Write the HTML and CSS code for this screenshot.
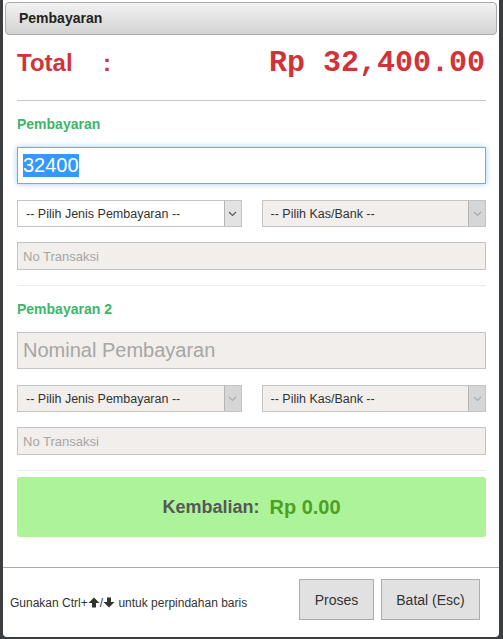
FILE: index.html
```html
<!DOCTYPE html>
<html lang="en">
<head>
    <meta charset="UTF-8">
    <title>Pembayaran</title>
    <link rel="stylesheet" href="styles.css">
</head>
<body>
    <div class="dialog">
        <div class="titlebar">Pembayaran</div>

        <div class="content">
            <div class="total">
                <span class="total-label">Total</span>
                <span class="total-colon">:</span>
                <span class="total-value">Rp 32,400.00</span>
            </div>
            <div class="rule"></div>

            <div class="section-title">Pembayaran</div>
            <div class="field big focus"><span class="picked">32400</span></div>
            <div class="pair">
                <div class="select">
                    <span>-- Pilih Jenis Pembayaran --</span>
                    <span class="arrow"><svg width="9" height="6" viewBox="0 0 9 6"><path d="M1 1l3.5 3.5L8 1" fill="none" stroke="#555" stroke-width="1.1"/></svg></span>
                </div>
                <div class="select off">
                    <span>-- Pilih Kas/Bank --</span>
                    <span class="arrow"><svg width="9" height="6" viewBox="0 0 9 6"><path d="M1 1l3.5 3.5L8 1" fill="none" stroke="#aaa" stroke-width="1.1"/></svg></span>
                </div>
            </div>
            <div class="field small off"><span class="hint">No Transaksi</span></div>
            <div class="rule light"></div>

            <div class="section-title">Pembayaran 2</div>
            <div class="field big off"><span class="hint">Nominal Pembayaran</span></div>
            <div class="pair">
                <div class="select off">
                    <span>-- Pilih Jenis Pembayaran --</span>
                    <span class="arrow"><svg width="9" height="6" viewBox="0 0 9 6"><path d="M1 1l3.5 3.5L8 1" fill="none" stroke="#aaa" stroke-width="1.1"/></svg></span>
                </div>
                <div class="select off">
                    <span>-- Pilih Kas/Bank --</span>
                    <span class="arrow"><svg width="9" height="6" viewBox="0 0 9 6"><path d="M1 1l3.5 3.5L8 1" fill="none" stroke="#aaa" stroke-width="1.1"/></svg></span>
                </div>
            </div>
            <div class="field small off"><span class="hint">No Transaksi</span></div>
            <div class="rule light"></div>

            <div class="change">
                <span class="change-label">Kembalian:</span>
                <span class="change-value">Rp 0.00</span>
            </div>
        </div>

        <div class="footer">
            <div class="tip">
                Gunakan Ctrl+<svg class="key" width="12" height="11" viewBox="0 0 12 11"><path d="M6 0.5L11.5 6H8V10.5H4V6H0.5Z" fill="#333"/></svg>/<svg class="key" width="12" height="11" viewBox="0 0 12 11"><path d="M6 10.5L11.5 5H8V0.5H4V5H0.5Z" fill="#333"/></svg> untuk perpindahan baris
            </div>
            <div class="buttons">
                <button class="btn proses">Proses</button>
                <button class="btn batal">Batal (Esc)</button>
            </div>
        </div>
    </div>
</body>
</html>
```

FILE: styles.css
```css
*{
    box-sizing: border-box;
    font-family: "Liberation Sans", Arial, sans-serif;
}

body{
    margin: 0;
    background-color: #3b3d40;
    height: 639px;
    overflow: hidden;
}

.dialog{
    margin: 0 4px 0 3px;
    height: 637px;
    background-color: #fff;
    border-radius: 0 0 4px 4px;
    padding-top: 2px;
    display: flex;
    flex-direction: column;
}

.titlebar{
    margin: 0 2px;
    height: 33px;
    border: 1px solid #aaa;
    border-radius: 4px;
    background: linear-gradient(#f2f2f2, #d3d3d3);
    font-size: 14px;
    font-weight: bold;
    color: #222;
    padding-left: 13px;
    line-height: 31px;
}

.content{
    padding: 0 13px 0 14px;
}

.total{
    display: flex;
    align-items: center;
    margin-top: 9px;
    height: 38px;
    color: #d2333a;
}

.total-label{
    font-size: 24px;
    font-weight: bold;
    width: 86px;
}

.total-colon{
    font-size: 24px;
    font-weight: bold;
}

.total-value{
    margin-left: auto;
    font-family: "Liberation Mono", "Courier New", monospace;
    font-size: 30px;
    font-weight: bold;
    margin-right: 1px;
}

.rule{
    margin-top: 18px;
    height: 1px;
    background-color: #c8c8c8;
}

.rule.light{
    margin-top: 15px;
    background-color: #ececec;
}

.section-title{
    margin-top: 15px;
    height: 16px;
    line-height: 16px;
    font-size: 14px;
    font-weight: bold;
    color: #3db56b;
}

.field{
    margin-top: 15px;
    border: 1px solid #c4c4c4;
    background-color: #fff;
    display: flex;
    align-items: center;
    padding-left: 5px;
}

.field.big{
    height: 37px;
    font-size: 20px;
}

.field.small{
    height: 28px;
    font-size: 13px;
}

.field.focus{
    border-color: #66afe9;
    box-shadow: 0 0 6px rgba(102, 175, 233, 0.6);
}

.field.off{
    background-color: #f1eeeb;
}

.picked{
    background-color: #3399ff;
    color: #fff;
    line-height: 23px;
}

.hint{
    color: #a6a6a6;
}

.pair{
    margin-top: 16px;
    display: flex;
    gap: 20px;
}

.select{
    flex: 1;
    height: 27px;
    border: 1px solid #c4c4c4;
    background-color: #fff;
    display: flex;
    align-items: center;
    padding-left: 8px;
    font-size: 12.5px;
    color: #333;
}

.select.off{
    background-color: #f1eeeb;
}

.select .arrow{
    margin-left: auto;
    width: 17px;
    height: 25px;
    background-color: #e3e3e3;
    border-left: 1px solid #b5b5b5;
    display: flex;
    align-items: center;
    justify-content: center;
}

.select.off .arrow{
    background-color: #d6d6d6;
}

.change{
    margin-top: 6px;
    height: 60px;
    border-radius: 3px;
    background-color: #adf39a;
    display: flex;
    justify-content: center;
    align-items: center;
    gap: 10px;
    font-weight: bold;
}

.change-label{
    font-size: 18px;
    color: #575757;
}

.change-value{
    font-size: 20px;
    color: #4ea023;
}

.footer{
    margin-top: auto;
    height: 70px;
    border-top: 1px solid #aaa;
    display: flex;
    align-items: flex-start;
    padding: 11px 19px 0 7px;
}

.tip{
    font-size: 12px;
    color: #333;
    margin-top: 17px;
}

.key{
    vertical-align: -1px;
}

.buttons{
    margin-left: auto;
    display: flex;
    gap: 7px;
}

.btn{
    height: 41px;
    border: 1px solid #adadad;
    background-color: #e1e1e1;
    font-size: 14px;
    color: #333;
    padding: 0;
}

.btn.proses{
    width: 75px;
}

.btn.batal{
    width: 99px;
}
```
